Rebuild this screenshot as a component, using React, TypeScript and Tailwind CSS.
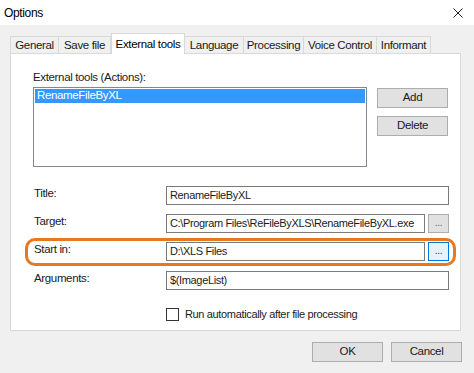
import React from 'react';

const font = { fontFamily: '"Liberation Sans", Arial, sans-serif' };

const tabs = ['General', 'Save file', 'External tools', 'Language', 'Processing', 'Voice Control', 'Informant'];
const tabWidths = [48, 52, 74, 59, 60, 73, 54];

const Button: React.FC<{ label: string; className?: string }> = ({ label, className = '' }) => (
  <div
    className={`flex h-[20px] w-[71px] items-center justify-center border border-[#adadad] bg-[#e1e1e1] text-[11.5px] text-[#1a1a1a] ${className}`}
  >
    {label}
  </div>
);

const Field: React.FC<{ value: string; className?: string }> = ({ value, className = '' }) => (
  <div
    className={`flex h-[19px] items-center overflow-hidden whitespace-nowrap border border-[#7a7a7a] bg-white pl-[3px] text-[11px] text-[#1a1a1a] ${className}`}
  >
    {value}
  </div>
);

const Row: React.FC<{ label: string; children: React.ReactNode; className?: string }> = ({
  label,
  children,
  className = '',
}) => (
  <div className={`relative flex items-start ${className}`}>
    <div className="w-[133px] pl-[1px] text-[11.5px] leading-[14px] text-[#1a1a1a]">{label}</div>
    {children}
  </div>
);

export default function App() {
  return (
    <div
      className="h-[373px] w-[474px] overflow-hidden whitespace-nowrap bg-[#f0f0f0] tracking-[-0.35px]"
      style={font}
    >
      {/* title bar */}
      <div className="flex h-[25px] items-center justify-between bg-white pl-[4px] pr-[11px]">
        <span className="text-[12px] text-black">Options</span>
        <svg width="10" height="10" viewBox="0 0 10 10" className="text-[#222]">
          <path d="M0.5 0.5 L9.5 9.5 M9.5 0.5 L0.5 9.5" stroke="currentColor" strokeWidth="1" />
        </svg>
      </div>

      {/* tabs */}
      <div className="flex h-[28px] items-end pl-[10px] pt-[8px]">
        {tabs.map((t, i) =>
          i === 2 ? (
            <div
              key={t}
              className="relative z-10 -mb-[1px] flex h-[21px] items-start justify-center border border-b-0 border-[#d9d9d9] bg-white pt-[2px] text-[11.5px] text-black"
              style={{ width: tabWidths[i] }}
            >
              {t}
            </div>
          ) : (
            <div
              key={t}
              className="-ml-[1px] flex h-[17px] items-center justify-center border border-b-0 border-[#d9d9d9] bg-[#f0f0f0] pt-[1px] text-[11.5px] text-[#1a1a1a] first:ml-0"
              style={{ width: tabWidths[i] + 1 }}
            >
              {t}
            </div>
          )
        )}
      </div>

      {/* panel */}
      <div className="ml-[10px] h-[278px] w-[451px] border border-[#d9d9d9] bg-white pl-[22px] pt-[16px]">
        <div className="text-[11.5px] leading-[14px] text-[#1a1a1a]">External tools (Actions):</div>
        <div className="mt-[3px] flex gap-[10px]">
          <div className="h-[80px] w-[334px] border border-[#828790] bg-white p-[1px]">
            <div className="flex h-[14px] items-center bg-[#3399ff] pl-[2px] text-[11.5px] text-white">
              RenameFileByXL
            </div>
          </div>
          <div className="flex flex-col gap-[8px] pt-[1px]">
            <Button label="Add" />
            <Button label="Delete" />
          </div>
        </div>

        <Row label="Title:" className="mt-[19px]">
          <Field value="RenameFileByXL" className="w-[283px]" />
        </Row>
        <Row label="Target:" className="mt-[9px]">
          <Field value="C:\Program Files\ReFileByXLS\RenameFileByXL.exe" className="w-[259px]" />
          <div className="ml-[3px] flex h-[19px] w-[21px] items-center justify-center border border-[#adadad] bg-[#e1e1e1] pb-[3px] text-[10px] text-[#666]">
            ...
          </div>
        </Row>
        <Row label="Start in:" className="mt-[9px]">
          <Field value="D:\XLS Files" className="w-[259px]" />
          <div className="ml-[3px] flex h-[19px] w-[21px] items-center justify-center border border-[#0078d7] bg-[#e5f1fb] pb-[3px] text-[10px] text-[#333]">
            ...
          </div>
          <div className="pointer-events-none absolute -left-[8px] -top-[4px] h-[28px] w-[431px] rounded-[10px] border-[3px] border-[#e8781e]" />
        </Row>
        <Row label="Arguments:" className="mt-[10px]">
          <Field value="$(ImageList)" className="w-[283px]" />
        </Row>

        <div className="mt-[16px] flex items-center pl-[133px]">
          <div className="h-[13px] w-[13px] border border-[#333] bg-white" />
          <span className="ml-[6px] text-[11px] text-[#1a1a1a]">Run automatically after file processing</span>
        </div>
      </div>

      {/* footer */}
      <div className="flex justify-end gap-[8px] pr-[12px] pt-[11px]">
        <Button label="OK" />
        <Button label="Cancel" />
      </div>
    </div>
  );
}
